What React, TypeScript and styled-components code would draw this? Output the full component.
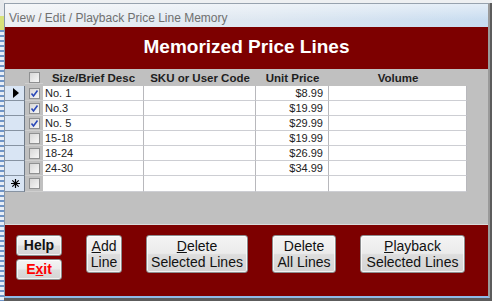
import styled, { createGlobalStyle } from "styled-components";

const GlobalStyle = createGlobalStyle`
  html, body {
    margin: 0;
    padding: 0;
  }
  body {
    width: 492px;
    height: 301px;
    overflow: hidden;
    font-family: "Liberation Sans", Arial, sans-serif;
  }
`;

const COLUMNS = "20px 18px 101px 112px 73px 138px";

interface Line {
  checked: boolean;
  desc: string;
  sku: string;
  price: string;
  volume: string;
}

const lines: Line[] = [
  { checked: true, desc: "No. 1", sku: "", price: "$8.99", volume: "" },
  { checked: true, desc: "No.3", sku: "", price: "$19.99", volume: "" },
  { checked: true, desc: "No. 5", sku: "", price: "$29.99", volume: "" },
  { checked: false, desc: "15-18", sku: "", price: "$19.99", volume: "" },
  { checked: false, desc: "18-24", sku: "", price: "$26.99", volume: "" },
  { checked: false, desc: "24-30", sku: "", price: "$34.99", volume: "" },
];

const CheckBox = ({ checked }: { checked: boolean }) => (
  <Box>
    {checked && (
      <svg width="9" height="9" viewBox="0 0 9 9">
        <path d="M1.5 4.5 L3.5 7 L7.5 1.5" fill="none" stroke="#2a48b8" strokeWidth="1.6" />
      </svg>
    )}
  </Box>
);

const App = () => {
  return (
    <Screen>
      <GlobalStyle />
      <Backdrop />
      <Window>
        <TitleBar>View / Edit / Playback Price Line Memory</TitleBar>
        <Header>Memorized Price Lines</Header>
        <Detail>
          <HeadRow>
            <span />
            <CheckCell>
              <CheckBox checked={false} />
            </CheckCell>
            <HeadCell>Size/Brief Desc</HeadCell>
            <HeadCell>SKU or User Code</HeadCell>
            <HeadCell>Unit Price</HeadCell>
            <HeadCell>Volume</HeadCell>
          </HeadRow>
          {lines.map((line, i) => (
            <Row key={i}>
              <Selector>
                {i === 0 && (
                  <svg width="6" height="10" viewBox="0 0 6 10">
                    <path d="M0 0 L6 5 L0 10 Z" fill="#000" />
                  </svg>
                )}
              </Selector>
              <CheckCell>
                <CheckBox checked={line.checked} />
              </CheckCell>
              <Cell>{line.desc}</Cell>
              <Cell>{line.sku}</Cell>
              <Cell $right>{line.price}</Cell>
              <Cell>{line.volume}</Cell>
            </Row>
          ))}
          <Row $last>
            <Selector>
              <svg width="9" height="9" viewBox="0 0 9 9">
                <path d="M4.5 0 V9 M0 4.5 H9 M1.3 1.3 L7.7 7.7 M7.7 1.3 L1.3 7.7" stroke="#000" strokeWidth="1.2" />
              </svg>
            </Selector>
            <CheckCell>
              <CheckBox checked={false} />
            </CheckCell>
            <Cell />
            <Cell />
            <Cell />
            <Cell />
          </Row>
        </Detail>
        <Footer>
          <SmallStack>
            <SmallButton>Help</SmallButton>
            <SmallButton $red>
              E<u>x</u>it
            </SmallButton>
          </SmallStack>
          <Button $width={36}>
            <u>A</u>dd
            <br />
            Line
          </Button>
          <Button $width={102}>
            <u>D</u>elete
            <br />
            Selected Lines
          </Button>
          <Button $width={64}>
            Delete
            <br />
            All Lines
          </Button>
          <Button $width={105}>
            <u>P</u>layback
            <br />
            Selected Lines
          </Button>
        </Footer>
      </Window>
    </Screen>
  );
};

export default App;

const Screen = styled.div`
  display: flex;
  height: 301px;
  padding-right: 2px;
  box-sizing: border-box;
  background: linear-gradient(to bottom, #eef0f2 0 3px, #5c5c5c 3px);
`;

const Backdrop = styled.div`
  width: 4px;
  flex-shrink: 0;
  background: linear-gradient(
      to bottom,
      #e6e9ec 0 16px,
      #d8e27a 16px 30px,
      transparent 30px
    ),
    repeating-linear-gradient(to bottom, #6f95c8 0 2px, #e9eef5 2px 5px);
`;

const Window = styled.div`
  flex: 1;
  display: flex;
  flex-direction: column;
  margin-top: 3px;
  height: 292px;
  border-top: 1px solid #97a2ae;
  border-left: 1px solid #8996a5;
  border-right: 2px solid #9a9a9a;
  border-bottom: 2px solid #8ebbe8;
`;

const TitleBar = styled.div`
  height: 23px;
  box-sizing: border-box;
  padding: 4px 0 0 4px;
  display: flex;
  align-items: center;
  font-size: 12px;
  color: #707070;
  background: linear-gradient(to bottom, rgba(255, 255, 255, 0.5), rgba(255, 255, 255, 0) 70%),
    linear-gradient(to right, #eceff3, #dde7f1 55%, #c8dcf0);
`;

const Header = styled.div`
  height: 42px;
  box-sizing: border-box;
  padding-bottom: 3px;
  display: flex;
  align-items: center;
  justify-content: center;
  background: #7d0000;
  color: #fff;
  font-size: 19px;
  font-weight: bold;
`;

const Detail = styled.div`
  height: 155px;
  background: #c0c0c0;
  border-bottom: 1px solid #dadada;
`;

const HeadRow = styled.div`
  display: grid;
  grid-template-columns: ${COLUMNS};
  height: 17px;
  align-items: center;
`;

const HeadCell = styled.div`
  text-align: center;
  font-size: 11.5px;
  font-weight: bold;
  color: #1e1e1e;
  white-space: nowrap;
`;

const Row = styled.div<{ $last?: boolean }>`
  display: grid;
  grid-template-columns: ${COLUMNS};
  height: ${({ $last }) => ($last ? "16px" : "15px")};
`;

const Selector = styled.div`
  display: flex;
  align-items: center;
  justify-content: center;
  padding-left: 2px;
  background: #d9e5f4;
  border-right: 1px solid #6f7a88;
  border-bottom: 1px solid #8793a2;
`;

const CheckCell = styled.div`
  display: flex;
  align-items: center;
  justify-content: center;
  padding-left: 1px;
  border-bottom: 1px solid #cfcfcf;
`;

const Box = styled.div`
  width: 11px;
  height: 11px;
  box-sizing: border-box;
  border: 1px solid #8f9091;
  background: linear-gradient(135deg, #d7d7d7, #f7f7f7);
  display: flex;
  align-items: center;
  justify-content: center;
`;

const Cell = styled.div<{ $right?: boolean }>`
  background: #fff;
  border-right: 1px solid #b8b8bc;
  border-bottom: 1px solid #cdced3;
  font-size: 11px;
  line-height: 14px;
  color: #222;
  padding: 0 ${({ $right }) => ($right ? "5px" : "2px")};
  text-align: ${({ $right }) => ($right ? "right" : "left")};
  white-space: nowrap;
  overflow: hidden;
`;

const Footer = styled.div`
  flex: 1;
  display: flex;
  align-items: flex-start;
  gap: 24px;
  padding: 10px 0 0 11px;
  background: #7d0000;
`;

const SmallStack = styled.div`
  display: flex;
  flex-direction: column;
  gap: 3px;
`;

const buttonLook = `
  box-sizing: border-box;
  border: 1px solid #8c8d8e;
  border-radius: 3px;
  box-shadow: inset 0 0 0 1px rgba(255, 255, 255, 0.7);
  background: linear-gradient(to bottom, #f4f4f4 0%, #ebebeb 48%, #dddddd 52%, #d4d4d4 100%);
  font-family: "Liberation Sans", Arial, sans-serif;
  font-size: 14px;
  line-height: 16px;
  text-align: center;
  white-space: nowrap;
`;

const SmallButton = styled.div<{ $red?: boolean }>`
  ${buttonLook}
  width: 46px;
  height: 21px;
  padding-top: 1px;
  font-weight: bold;
  color: ${({ $red }) => ($red ? "#ff0000" : "#111")};
`;

const Button = styled.div<{ $width: number }>`
  ${buttonLook}
  width: ${({ $width }) => $width}px;
  height: 38px;
  padding-top: 2px;
  color: #111;
`;
